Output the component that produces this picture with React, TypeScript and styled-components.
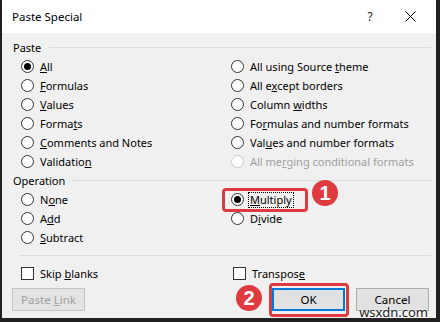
import React from 'react';
import styled, { createGlobalStyle } from 'styled-components';

type Opt = { text: string; key: number; checked?: boolean; disabled?: boolean; focused?: boolean } | null;

const pasteRows: [Opt, Opt][] = [
    [{ text: 'All', key: 0, checked: true }, { text: 'All using Source theme', key: 17 }],
    [{ text: 'Formulas', key: 0 }, { text: 'All except borders', key: 5 }],
    [{ text: 'Values', key: 0 }, { text: 'Column widths', key: 7 }],
    [{ text: 'Formats', key: 5 }, { text: 'Formulas and number formats', key: 2 }],
    [{ text: 'Comments and Notes', key: 0 }, { text: 'Values and number formats', key: 3 }],
    [{ text: 'Validation', key: 9 }, { text: 'All merging conditional formats', key: 6, disabled: true }],
];

const operationRows: [Opt, Opt][] = [
    [{ text: 'None', key: 1 }, { text: 'Multiply', key: 0, checked: true, focused: true }],
    [{ text: 'Add', key: 1 }, { text: 'Divide', key: 1 }],
    [{ text: 'Subtract', key: 0 }, null],
];

const Keyed = ({ text, k }: { text: string, k: number }) => (
    <>{text.slice(0, k)}<u>{text[k]}</u>{text.slice(k + 1)}</>
);

const Option = ({ opt }: { opt: Opt }) => {
    if (!opt) return <span />;
    return (
        <OptionRow $disabled={opt.disabled}>
            <Radio $checked={opt.checked} $disabled={opt.disabled} />
            <OptionText $focused={opt.focused}><Keyed text={opt.text} k={opt.key} /></OptionText>
        </OptionRow>
    );
};

const App = () => {
    return (
        <Screen>
            <GlobalStyle />
            <Dialog>
                <TitleBar>
                    <Title>Paste Special</Title>
                    <TitleButton>?</TitleButton>
                    <TitleButton>
                        <svg width="11" height="11" viewBox="0 0 11 11">
                            <path d="M0.5 0.5 L10.5 10.5 M10.5 0.5 L0.5 10.5" stroke="#000" strokeWidth="1" fill="none" />
                        </svg>
                    </TitleButton>
                </TitleBar>
                <Body>
                    <GroupHeader>Paste</GroupHeader>
                    <Options>
                        {pasteRows.map((row, i) => (
                            <React.Fragment key={i}>
                                <Option opt={row[0]} />
                                <Option opt={row[1]} />
                            </React.Fragment>
                        ))}
                    </Options>
                    <GroupHeader>Operation</GroupHeader>
                    <Options>
                        {operationRows.map((row, i) => (
                            <React.Fragment key={i}>
                                <Option opt={row[0]} />
                                <Option opt={row[1]} />
                            </React.Fragment>
                        ))}
                    </Options>
                    <Separator />
                    <Options>
                        <OptionRow>
                            <CheckBox />
                            <OptionText><Keyed text="Skip blanks" k={5} /></OptionText>
                        </OptionRow>
                        <OptionRow $shift>
                            <CheckBox />
                            <OptionText><Keyed text="Transpose" k={8} /></OptionText>
                        </OptionRow>
                    </Options>
                    <ButtonRow>
                        <Button disabled><Keyed text="Paste Link" k={6} /></Button>
                        <ButtonGroup>
                            <Button $default>OK</Button>
                            <Button>Cancel</Button>
                        </ButtonGroup>
                    </ButtonRow>
                </Body>
            </Dialog>

            <Highlight style={{ left: 222, top: 188, width: 86, height: 24 }} />
            <Highlight style={{ left: 269, top: 283, width: 80, height: 34 }} />
            <Badge style={{ left: 312, top: 180 }}>1</Badge>
            <Badge style={{ left: 236, top: 285 }}>2</Badge>
            <Watermark>wsxdn.com</Watermark>
        </Screen>
    );
};

export default App;

const GlobalStyle = createGlobalStyle`
    html, body {
        margin: 0;
        padding: 0;
        background: #202020;
    }
    body {
        font-family: "Segoe UI", "Noto Sans", sans-serif;
        font-size: 11px;
        color: #000;
    }
`;

const Screen = styled.div`
    position: relative;
    width: 440px;
    height: 322px;
    background: #202020;
    overflow: hidden;
`;

const Dialog = styled.div`
    width: 434px;
    height: 318px;
    margin-left: 2px;
    background: #f0f0f0;
    display: flex;
    flex-direction: column;
`;

const TitleBar = styled.div`
    height: 33px;
    flex: none;
    background: #fff;
    display: flex;
    align-items: center;
    padding: 0 11px 0 10px;
    gap: 10px;
`;

const Title = styled.div`
    flex: 1;
    font-size: 11.5px;
    padding-bottom: 1px;
`;

const TitleButton = styled.div`
    width: 30px;
    height: 33px;
    display: flex;
    align-items: center;
    justify-content: center;
    font-size: 12px;
    color: #222;
`;

const Body = styled.div`
    flex: 1;
    display: flex;
    flex-direction: column;
    padding: 5px 5px 7px 10px;
`;

const GroupHeader = styled.div`
    height: 19px;
    display: flex;
    align-items: center;
    gap: 8px;
    padding-left: 1px;

    &::after {
        content: '';
        flex: 1;
        height: 1px;
        background: #dcdcdc;
    }
`;

const Options = styled.div`
    display: grid;
    grid-template-columns: 210px 1fr;
    grid-auto-rows: 19px;
    padding-left: 9px;
`;

const OptionRow = styled.div<{ $disabled?: boolean, $shift?: boolean }>`
    display: flex;
    align-items: center;
    gap: 6px;
    white-space: nowrap;
    padding-left: ${p => p.$shift ? '2px' : '0'};
    color: ${p => p.$disabled ? '#a0a0a0' : '#000'};
`;

const OptionText = styled.span<{ $focused?: boolean }>`
    line-height: 14px;
    padding: 0 1px;
    margin-left: -1px;
    outline: ${p => p.$focused ? '1px dotted #000' : 'none'};
`;

const Radio = styled.span<{ $checked?: boolean, $disabled?: boolean }>`
    width: 13px;
    height: 13px;
    flex: none;
    box-sizing: border-box;
    border-radius: 50%;
    border: 1px solid ${p => p.$disabled ? '#cccccc' : '#333333'};
    background: #fff;
    display: flex;
    align-items: center;
    justify-content: center;

    &::after {
        content: '';
        width: 7px;
        height: 7px;
        border-radius: 50%;
        background: #000;
        display: ${p => p.$checked ? 'block' : 'none'};
    }
`;

const CheckBox = styled.span`
    width: 13px;
    height: 13px;
    flex: none;
    box-sizing: border-box;
    border: 1px solid #333;
    background: #fff;
`;

const Separator = styled.div`
    height: 1px;
    background: #dcdcdc;
    margin: 8px 0 8px 7px;
`;

const ButtonRow = styled.div`
    margin-top: 5px;
    display: flex;
    justify-content: space-between;
    padding-right: 2px;
`;

const ButtonGroup = styled.div`
    display: flex;
    gap: 11px;
`;

const Button = styled.button<{ $default?: boolean }>`
    width: 73px;
    height: 23px;
    box-sizing: border-box;
    padding: 0;
    font-family: inherit;
    font-size: 11.5px;
    color: #000;
    background: #e1e1e1;
    border: 1px solid #adadad;
    border-radius: 0;

    ${p => p.$default && `
        border: 2px solid #0078d7;
    `}

    &:disabled {
        color: #a0a0a0;
        background: #e3e3e3;
        border-color: #c4c4c4;
    }
`;

const Highlight = styled.div`
    position: absolute;
    box-sizing: border-box;
    border: 3px solid #de3a3f;
    border-radius: 4px;
`;

const Badge = styled.div`
    position: absolute;
    width: 26px;
    height: 26px;
    border-radius: 50%;
    background: #de3a3f;
    color: #fff;
    font-family: "Liberation Sans", Arial, sans-serif;
    font-weight: bold;
    font-size: 20px;
    display: flex;
    align-items: center;
    justify-content: center;
`;

const Watermark = styled.div`
    position: absolute;
    right: 12px;
    bottom: 2px;
    font-family: "Noto Sans", sans-serif;
    font-size: 13px;
    line-height: 16px;
    color: #222;
    text-shadow: 0 0 2px #fff, 0 0 2px #fff;
`;
